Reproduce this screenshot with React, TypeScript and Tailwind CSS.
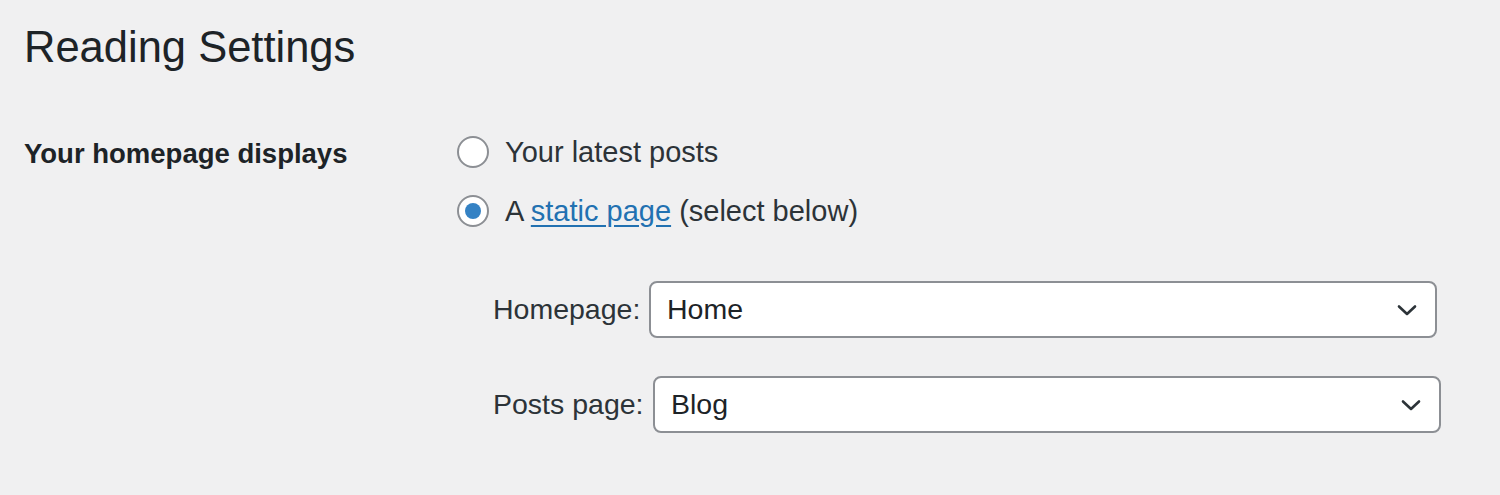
import React from "react";

function Chevron() {
  return (
    <svg width="24" height="24" viewBox="0 0 24 24" fill="none" className="shrink-0">
      <path d="M4 8.5 L12 16 L20 8.5" stroke="#2c3338" strokeWidth="2.6" strokeLinecap="round" strokeLinejoin="round" />
    </svg>
  );
}

function Radio({ checked }: { checked?: boolean }) {
  return (
    <span className="flex h-8 w-8 shrink-0 items-center justify-center rounded-full border-2 border-[#8c8f94] bg-white">
      {checked && <span className="h-4 w-4 rounded-full bg-[#3582c4]" />}
    </span>
  );
}

function SelectRow({ label, value, labelW }: { label: string; value: string; labelW: string }) {
  return (
    <div className="flex items-center">
      <span className={`${labelW} shrink-0 text-[28.5px] text-[#2c3338]`}>{label}</span>
      <div className="flex h-[57px] w-[788px] items-center justify-between rounded-lg border-2 border-[#8c8f94] bg-white pl-4 pr-4">
        <span className="text-[28.5px] text-[#1d2327]">{value}</span>
        <Chevron />
      </div>
    </div>
  );
}

export default function App() {
  return (
    <div
      className="h-[495px] w-full overflow-hidden bg-[#f0f0f1] pl-6 pt-5 text-[#1d2327]"
      style={{ fontFamily: "'Liberation Sans', Arial, sans-serif" }}
    >
      <h1 className="text-[43.5px] leading-[54px] text-[#1d2327]">Reading Settings</h1>
      <div className="mt-[62px] flex">
        <div className="w-[433px] shrink-0 pt-[2px] text-[27.5px] font-bold leading-[32px]">Your homepage displays</div>
        <div className="flex flex-col">
          <div className="flex flex-col gap-[27px]">
            <label className="flex items-center gap-4 text-[29px] leading-[32px] text-[#2c3338]">
              <Radio />
              <span>Your latest posts</span>
            </label>
            <label className="flex items-center gap-4 text-[29px] leading-[32px] text-[#2c3338]">
              <Radio checked />
              <span>
                A{" "}
                <span className="text-[#2271b1] underline underline-offset-4">static page</span>{" "}
                (select below)
              </span>
            </label>
          </div>
          <div className="ml-9 mt-[54px] flex flex-col gap-[38px]">
            <SelectRow label="Homepage:" value="Home" labelW="w-[156px]" />
            <SelectRow label="Posts page:" value="Blog" labelW="w-[160px]" />
          </div>
        </div>
      </div>
    </div>
  );
}
